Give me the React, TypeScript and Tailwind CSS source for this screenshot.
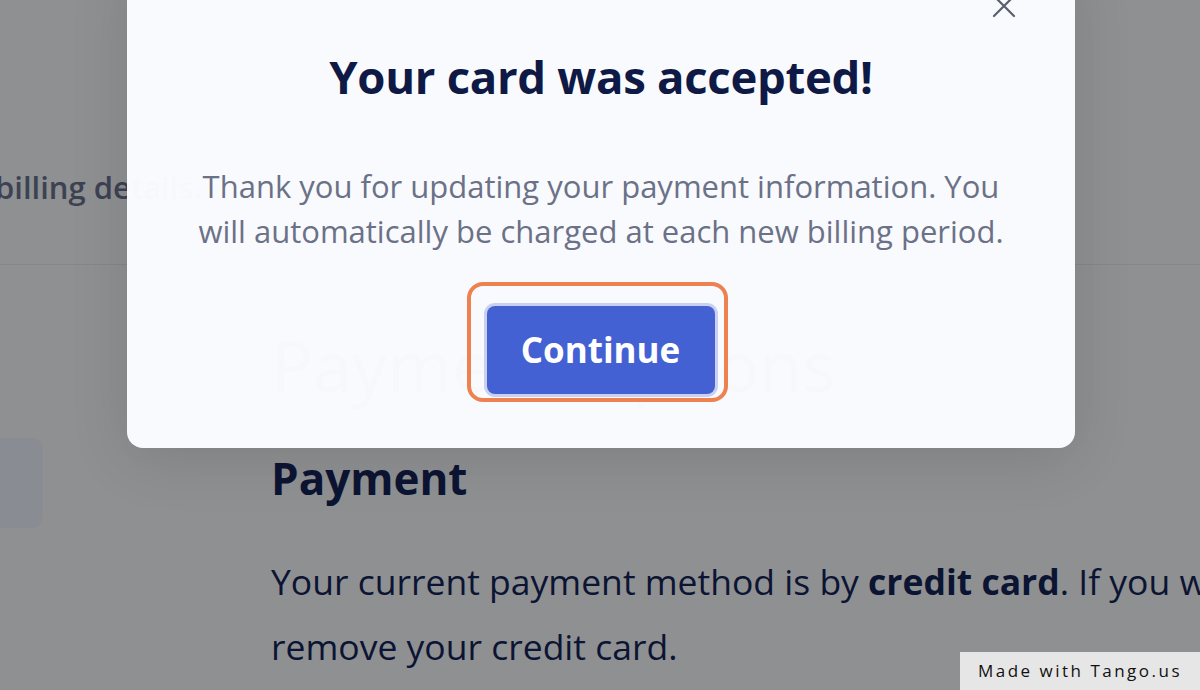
import React from 'react';

const font = { fontFamily: '"Open Sans", "Noto Sans", sans-serif' };

const App: React.FC = () => {
    return (
        <div className="relative w-[1200px] h-[690px] overflow-hidden bg-[#8f9091]" style={font}>
            {/* page behind the overlay */}
            <div className="flex flex-col">
                <div className="h-[265px] border-b border-[#858687] flex items-end pb-[54px]">
                    <span className="ml-[-5px] text-[31px] font-semibold text-[#3d4253] whitespace-nowrap">billing details.</span>
                </div>
                <div className="flex">
                    <div className="w-[271px] shrink-0 pt-[173px]">
                        <div className="w-[55px] h-[90px] ml-[-12px] rounded-[10px] bg-[#8a8c94]" />
                    </div>
                    <div className="flex flex-col text-[#0c1433] whitespace-nowrap">
                        <h1 className="mt-[60px] text-[70px] leading-[80px] text-[#2b3147]">Payment Options</h1>
                        <h2 className="mt-[43px] text-[44px] leading-[60px] font-bold">Payment</h2>
                        <p className="mt-[41px] text-[35.5px] leading-[65px]">
                            Your current payment method is by <b className="font-bold">credit card</b>. If you want to
                            <br />
                            remove your credit card.
                        </p>
                    </div>
                </div>
            </div>

            {/* modal */}
            <div className="absolute left-[127px] top-[-40px] w-[948px] h-[488px] rounded-[16px] bg-[#fbfcff]/[0.98] shadow-[0_10px_60px_rgba(0,0,0,0.12)] flex flex-col items-center">
                <button className="absolute right-[58px] top-[33px] text-[#5a5f70]">
                    <svg width="26" height="26" viewBox="0 0 26 26" fill="none" stroke="currentColor" strokeWidth="2.2" strokeLinecap="round">
                        <path d="M3 3L23 23M23 3L3 23" />
                    </svg>
                </button>
                <h2 className="mt-[86px] text-[45.5px] leading-[60px] font-bold text-[#0e1a45] tracking-[-0.3px]">Your card was accepted!</h2>
                <p className="mt-[58px] text-[31px] leading-[45px] text-[#6b7187] text-center">
                    Thank you for updating your payment information. You
                    <br />
                    will automatically be charged at each new billing period.
                </p>
                <div className="mt-[28px] mr-[8px] pt-[20px] pb-[4px] pl-[16px] pr-[9px] rounded-[16px] border-[4px] border-[#ee8150]">
                    <button className="w-[228px] h-[88px] rounded-[8px] bg-[#4461d4] ring-[3px] ring-[#c9d0f1] text-white text-[35px] font-bold">
                        Continue
                    </button>
                </div>
            </div>

            {/* badge */}
            <div className="absolute right-0 bottom-0 w-[240px] h-[38px] bg-[#e6e6e6] flex items-center justify-center text-[17px] tracking-[2.5px] text-[#111]">
                Made with Tango.us
            </div>
        </div>
    );
};

export default App;
